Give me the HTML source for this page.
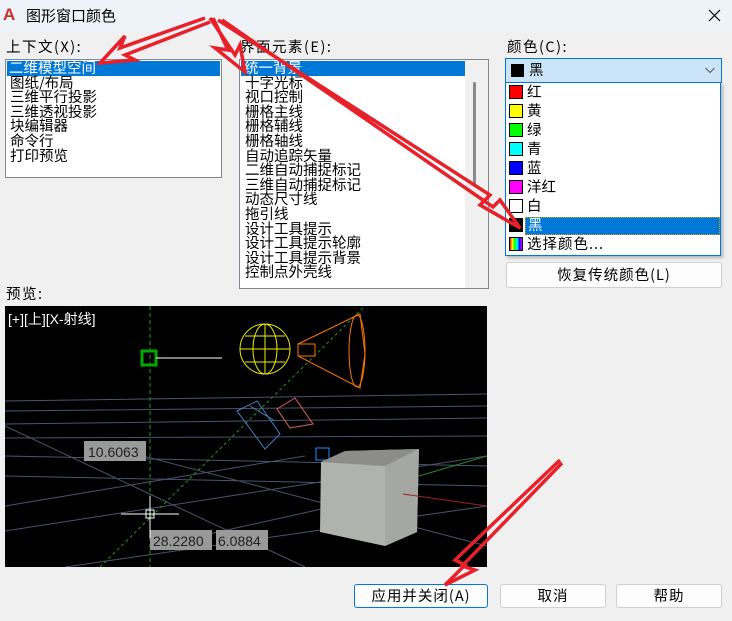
<!DOCTYPE html>
<html><head><meta charset="utf-8"><style>
*{margin:0;padding:0;box-sizing:border-box}
body{width:732px;height:621px;background:#f0f0f0;font-family:"Liberation Sans","Noto Sans CJK SC",sans-serif;font-size:13px;color:#000;position:relative;overflow:hidden}
.abs{position:absolute}
.t{font-family:"WenQuanYi Zen Hei","Noto Sans CJK SC",sans-serif;font-size:14.5px;line-height:14.6px;white-space:nowrap}
.lb{letter-spacing:1.5px}
.list{background:#fff;border:1px solid #828790}
.sel{background:#0078d7;color:#fff}
.btn{background:#fdfdfd;border:1px solid #d0d0d0;border-radius:3px;text-align:center;line-height:22px;letter-spacing:1px}
.sw{position:absolute;width:14px;height:14px;border:1px solid #000;left:3px}
.dd div.r{position:absolute;left:0;right:0;height:19px}
.dd span{position:absolute;left:21px;top:2px}
</style></head><body>
<div class="abs" style="left:0;top:0;width:732px;height:32px;background:#eef3f9"></div>
<div class="abs" style="left:3px;top:5px;font:bold 17px 'Liberation Sans';color:#c8302a">A</div>
<div class="abs" style="left:26px;top:5px;font-size:15px;font-family:'Noto Sans CJK SC',sans-serif">图形窗口颜色</div>
<svg class="abs" style="left:708px;top:9px" width="13" height="13"><path d="M1 1L12 12M12 1L1 12" stroke="#000" stroke-width="1.2"/></svg>

<div class="abs t lb" style="left:6px;top:40px">上下文(X):</div>
<div class="abs list t" style="left:5px;top:59px;width:217px;height:119px;padding:1px">
<div class="sel" style="padding-left:2px">二维模型空间</div>
<div style="padding-left:3px">图纸/布局<br>三维平行投影<br>三维透视投影<br>块编辑器<br>命令行<br>打印预览</div></div>

<div class="abs t lb" style="left:240px;top:40px">界面元素(E):</div>
<div class="abs list t" style="left:239px;top:59px;width:250px;height:230px;padding:1px;overflow:hidden">
<div class="sel" style="width:224px;padding-left:3px">统一背景</div>
<div style="padding-left:4px">十字光标<br>视口控制<br>栅格主线<br>栅格辅线<br>栅格轴线<br>自动追踪矢量<br>二维自动捕捉标记<br>三维自动捕捉标记<br>动态尺寸线<br>拖引线<br>设计工具提示<br>设计工具提示轮廓<br>设计工具提示背景<br>控制点外壳线</div>
<div class="abs" style="left:225px;top:0;width:23px;height:228px;background:#f0f0f0"></div>
<div class="abs" style="left:233px;top:22px;width:3px;height:103px;background:#8a8a8a;border-radius:2px"></div>
</div>

<div class="abs t lb" style="left:507px;top:40px">颜色(C):</div>
<div class="abs" style="left:505px;top:58px;width:217px;height:25px;background:#cce4f7;border:1px solid #0078d7">
<div class="abs" style="left:5px;top:5px;width:13px;height:13px;background:#000"></div>
<div class="abs t" style="left:23px;top:4px">黑</div>
<svg class="abs" style="left:199px;top:8px" width="10" height="7"><path d="M0.5 1L5 5.5L9.5 1" stroke="#555" fill="none"/></svg>
</div>
<div class="abs dd t" style="left:505px;top:82px;width:216px;height:174px;background:#fff;border:1px solid #0078d7;box-shadow:2px 2px 3px rgba(0,0,0,.25)">
<div class="r" style="top:0"><i class="sw" style="top:2px;background:#f00"></i><span>红</span></div>
<div class="r" style="top:19px"><i class="sw" style="top:2px;background:#ff0"></i><span>黄</span></div>
<div class="r" style="top:38px"><i class="sw" style="top:2px;background:#0f0"></i><span>绿</span></div>
<div class="r" style="top:57px"><i class="sw" style="top:2px;background:#0ff"></i><span>青</span></div>
<div class="r" style="top:76px"><i class="sw" style="top:2px;background:#00f"></i><span>蓝</span></div>
<div class="r" style="top:95px"><i class="sw" style="top:2px;background:#f0f"></i><span>洋红</span></div>
<div class="r" style="top:114px"><i class="sw" style="top:2px;background:#fff"></i><span>白</span></div>
<div class="r" style="top:133px"><div class="abs" style="left:19px;right:0;top:1px;height:18px;background:#0078d7;border:1px dotted #e0a000"></div><i class="sw" style="top:2px;background:#000"></i><span style="color:#fff;left:22px">黑</span></div>
<div class="r" style="top:152px"><i class="sw" style="top:2px;background:linear-gradient(90deg,#f00,#ff0,#0f0,#0ff,#00f,#f0f)"></i><span style="letter-spacing:1px">选择颜色...</span></div>
</div>
<div class="abs btn t" style="left:506px;top:262px;width:216px;height:26px;line-height:24px">恢复传统颜色(L)</div>

<div class="abs t lb" style="left:6px;top:287px">预览:</div>
<svg class="abs" style="left:5px;top:306px;background:#000" width="482" height="261">
<g stroke="#4a5470" stroke-width="1" fill="none">
<path d="M0 95L482 88M0 105L482 100M0 118L482 112M0 132L482 130M0 150L482 160M0 170L482 180M0 200L300 150M0 225L482 150M60 261L482 200M0 120L300 261M100 140L482 240M150 240L330 200"/>
</g>
<path d="M145 0V261" stroke="#1f9a1f" stroke-dasharray="4,3"/>
<path d="M95 261L360 0" stroke="#1f9a1f" stroke-dasharray="3,3"/>
<rect x="137" y="45" width="14" height="14" fill="none" stroke="#0a0" stroke-width="3"/>
<path d="M151 52H217" stroke="#fff"/>
<g stroke="#ee0" fill="none"><circle cx="260" cy="43" r="25"/><ellipse cx="260" cy="43" rx="12" ry="25"/><path d="M235 43H285M240 30H280M240 56H280M260 18V68"/></g>
<g stroke="#f70" fill="none"><path d="M293 38L355 8L360 48L355 82L293 50Z"/><ellipse cx="352" cy="45" rx="8" ry="36"/><path d="M293 38H310V50H293"/></g>
<g stroke="#4a7fc0" fill="none"><path d="M232 105L252 95L275 128L260 143Z M245 100L270 115"/></g>
<g stroke="#e06060" fill="none"><path d="M272 103L290 92L308 118L285 122Z"/></g>
<rect x="79" y="135" width="62" height="20" fill="#999"/><text x="83" y="151" font-family="Liberation Sans" font-size="14" fill="#222">10.6063</text>
<rect x="145" y="224" width="62" height="20" fill="#999"/><text x="148" y="240" font-family="Liberation Sans" font-size="14" fill="#222">28.2280</text>
<rect x="211" y="224" width="52" height="20" fill="#999"/><text x="213" y="240" font-family="Liberation Sans" font-size="14" fill="#222">6.0884</text>
<path d="M116 208H174M145 190V232" stroke="#fff"/><rect x="141" y="204" width="8" height="8" fill="none" stroke="#fff"/>
<rect x="311" y="142" width="13" height="12" fill="none" stroke="#1e90ff"/>
<path d="M316 156L340 145L414 143L412 226L380 240L315 226Z" fill="#b0b2ad"/>
<path d="M316 156L340 145L414 143L380 160Z" fill="#8c8c8a"/>
<path d="M380 160L414 143L412 226L380 240Z" fill="#a5a7a2"/>
<path d="M398 188L482 200" stroke="#a02020"/><path d="M414 170L482 150" stroke="#2a8a2a"/>
<text x="3" y="18" font-family="Liberation Sans,Noto Sans CJK SC" font-size="14" fill="#fff">[+][上][X-射线]</text>
</svg>

<div class="abs btn t" style="left:354px;top:584px;width:134px;height:24px;border-color:#0078d7">应用并关闭(A)</div>
<div class="abs btn t" style="left:500px;top:584px;width:106px;height:24px">取消</div>
<div class="abs btn t" style="left:616px;top:584px;width:106px;height:24px">帮助</div>

<svg class="abs" style="left:0;top:0" width="732" height="621">
<g stroke="#e8202a" stroke-width="3.5" fill="none" stroke-linejoin="miter">
<path d="M205 18L120 48L125 36L100 63L135 60L125 55L210 22"/>
<path d="M210 18L235 55L240 45L245 72L215 48L228 50L213 18"/>
<path d="M218 20L490 195L480 205L520 228L500 200L493 207L222 20"/>
<path d="M560 460L455 560L465 565L445 585L475 570L462 566L562 463"/>
</g>
</svg>
</body></html>
